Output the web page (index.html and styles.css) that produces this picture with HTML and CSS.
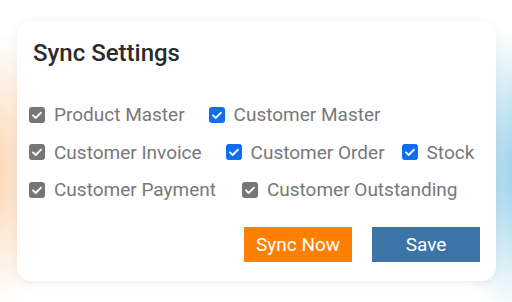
FILE: index.html
```html
<!DOCTYPE html>
<html>
<head>
<meta charset="utf-8">
<link rel="stylesheet" href="styles.css">
</head>
<body>
<div class="stage">
  <div class="card">
    <h1 class="title">Sync Settings</h1>
    <div class="options">
      <div class="row">
        <label class="opt"><span class="box gray"><svg viewBox="0 0 16 16"><path d="M4 8.3l2.7 2.7L12 5.6"/></svg></span>Product Master</label>
        <label class="opt"><span class="box blue"><svg viewBox="0 0 16 16"><path d="M4 8.3l2.7 2.7L12 5.6"/></svg></span>Customer Master</label>
      </div>
      <div class="row">
        <label class="opt"><span class="box gray"><svg viewBox="0 0 16 16"><path d="M4 8.3l2.7 2.7L12 5.6"/></svg></span>Customer Invoice</label>
        <label class="opt"><span class="box blue"><svg viewBox="0 0 16 16"><path d="M4 8.3l2.7 2.7L12 5.6"/></svg></span>Customer Order</label>
        <label class="opt close"><span class="box blue"><svg viewBox="0 0 16 16"><path d="M4 8.3l2.7 2.7L12 5.6"/></svg></span>Stock</label>
      </div>
      <div class="row">
        <label class="opt"><span class="box gray"><svg viewBox="0 0 16 16"><path d="M4 8.3l2.7 2.7L12 5.6"/></svg></span>Customer Payment</label>
        <label class="opt wide"><span class="box gray"><svg viewBox="0 0 16 16"><path d="M4 8.3l2.7 2.7L12 5.6"/></svg></span>Customer Outstanding</label>
      </div>
    </div>
    <div class="actions">
      <button class="btn sync">Sync Now</button>
      <button class="btn save">Save</button>
    </div>
  </div>
</div>
</body>
</html>
```
FILE: styles.css
```css
* { box-sizing: border-box; }
html, body { margin: 0; padding: 0; }
body {
  width: 512px;
  height: 302px;
  overflow: hidden;
  font-family: Roboto, "Liberation Sans", sans-serif;
  background:
    radial-gradient(ellipse 78px 140px at -10px 170px, rgba(251, 212, 176, 1), rgba(251, 212, 176, 0) 100%),
    radial-gradient(ellipse 88px 145px at 525px 172px, rgba(145, 205, 234, 1), rgba(145, 205, 234, 0) 100%),
    #ffffff;
}
.stage {
  padding: 21px 16px 21px 17px;
}
.card {
  background: #ffffff;
  border-radius: 14px;
  height: 260px;
  padding: 17px 16px 19px 12px;
  box-shadow: 0 2px 10px rgba(0, 0, 0, 0.07);
  display: flex;
  flex-direction: column;
}
.title {
  margin: 0 0 0 4px;
  font-size: 24px;
  font-weight: 500;
  line-height: 30px;
  color: #2b2b2b;
}
.options {
  margin-top: 28px;
  display: flex;
  flex-direction: column;
}
.row {
  display: flex;
  align-items: center;
  height: 37.5px;
}
.opt {
  display: flex;
  align-items: center;
  gap: 9px;
  font-size: 19px;
  color: #787878;
  white-space: nowrap;
}
.opt + .opt { margin-left: 24px; }
.opt.close { margin-left: 17px; }
.opt.wide { margin-left: 26px; }
.box {
  width: 16px;
  height: 16px;
  border-radius: 3px;
  display: inline-flex;
}
.box svg { width: 16px; height: 16px; }
.box path {
  fill: none;
  stroke: #ffffff;
  stroke-width: 1.8;
  stroke-linecap: round;
  stroke-linejoin: round;
}
.gray { background: #767676; }
.blue { background: #0b6ff0; }
.actions {
  margin-top: auto;
  display: flex;
  justify-content: flex-end;
  gap: 20px;
}
.btn {
  width: 108px;
  height: 35px;
  border: none;
  font-family: Roboto, "Liberation Sans", sans-serif;
  font-size: 19px;
  color: #ffffff;
  padding: 0;
}
.sync { background: #ff8000; }
.save { background: #3d74a8; }
```
